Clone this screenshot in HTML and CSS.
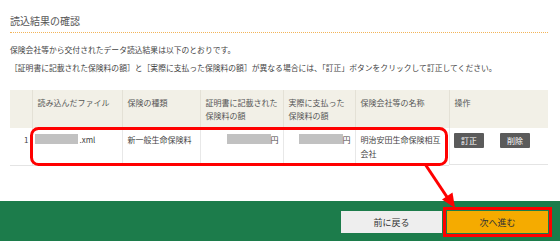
FILE: index.html
```html
<!DOCTYPE html>
<html lang="ja">
<head>
<meta charset="utf-8">
<link rel="stylesheet" href="styles.css">
</head>
<body>
<div class="page">
  <main class="main">
    <h1 class="title">読込結果の確認</h1>
    <p class="lead">保険会社等から交付されたデータ読込結果は以下のとおりです。<br>［証明書に記載された保険料の額］と［実際に支払った保険料の額］が異なる場合には、「訂正」ボタンをクリックして訂正してください。</p>
    <table class="result">
      <colgroup>
        <col class="c-no"><col class="c-file"><col class="c-kind"><col class="c-amt1"><col class="c-amt2"><col class="c-name"><col class="c-op">
      </colgroup>
      <thead>
        <tr>
          <th></th>
          <th>読み込んだファイル</th>
          <th>保険の種類</th>
          <th>証明書に記載された<br>保険料の額</th>
          <th>実際に支払った<br>保険料の額</th>
          <th>保険会社等の名称</th>
          <th>操作</th>
        </tr>
      </thead>
      <tbody>
        <tr>
          <td class="num">1</td>
          <td><span class="mask mask-file"></span>.xml</td>
          <td>新一般生命保険料</td>
          <td class="amt"><span class="mask mask-amt"></span>円</td>
          <td class="amt"><span class="mask mask-amt"></span>円</td>
          <td>明治安田生命保険相互<br>会社</td>
          <td class="ops"><button class="op">訂正</button><button class="op">削除</button></td>
        </tr>
      </tbody>
    </table>
  </main>
  <footer class="footer">
    <button class="btn btn-back">前に戻る</button>
    <button class="btn btn-next">次へ進む</button>
  </footer>
  <svg class="annot" width="560" height="241" viewBox="0 0 560 241">
    <rect x="31.5" y="128.5" width="415" height="36" rx="7" ry="7" fill="none" stroke="#f00" stroke-width="3"/>
    <line x1="425" y1="164" x2="449" y2="200" stroke="#f00" stroke-width="3"/>
    <polygon points="455,208 452.5,192.5 442,199.5" fill="#f00"/>
    <rect x="444.5" y="208.5" width="106" height="27" fill="none" stroke="#f00" stroke-width="3"/>
  </svg>
</div>
</body>
</html>
```
FILE: styles.css
```css
* { box-sizing: border-box; }
html, body { margin: 0; padding: 0; background: #fff; }
body {
  font-family: "Noto Sans CJK JP", "Noto Sans", sans-serif;
  color: #444;
  width: 560px;
  height: 241px;
  overflow: hidden;
}
.page { position: relative; width: 560px; height: 241px; display: flex; flex-direction: column; }
.main { padding: 14px 12px 0 10px; height: 201px; }
.title {
  margin: 0;
  font-size: 10px;
  line-height: 14px;
  font-weight: normal;
  color: #555;
  padding-bottom: 4px;
  border-bottom: 1px dotted #f3b458;
}
.lead {
  margin: 8px 0 0;
  font-size: 7.8px;
  line-height: 18px;
  color: #444;
  white-space: nowrap;
}
.result {
  margin-top: 13px;
  width: 538px;
  border-collapse: collapse;
  table-layout: fixed;
  font-size: 8px;
}
.c-no { width: 22px; }
.c-file { width: 90px; }
.c-kind { width: 78px; }
.c-amt1 { width: 83px; }
.c-amt2 { width: 72px; }
.c-name { width: 94px; }
.c-op { width: 99px; }
.result th {
  background: #f2f0e7;
  font-weight: normal;
  text-align: left;
  vertical-align: top;
  color: #555;
  line-height: 13px;
  padding: 6px 4px 6px 5px;
  height: 38px;
  border-left: 1px solid #e4e1d6;
}
.result th:first-child { border-left: none; }
.result td {
  vertical-align: top;
  line-height: 14px;
  padding: 5px 4px 4px 5px;
  height: 37px;
  border-left: 1px solid #e8e8e8;
  border-bottom: 1px solid #e4e4e4;
  white-space: nowrap;
}
.result td:first-child { border-left: none; }
.result td.num { text-align: right; padding-right: 3px; }
.result td.amt { text-align: right; padding-right: 4px; }
.mask {
  display: inline-block;
  background: #c1c1c1;
  height: 10px;
  vertical-align: -1px;
}
.mask-file { width: 43px; margin-right: 2px; margin-left: -3px; }
.mask-amt { width: 44px; }
.ops { display: flex; gap: 16px; padding-left: 4px !important; }
.op {
  margin: 0;
  width: 30px;
  height: 15px;
  border: none;
  border-radius: 1px;
  background: #5b5b5b;
  color: #fff;
  font-family: inherit;
  font-size: 8px;
  line-height: 15px;
  padding: 0;
}
.footer {
  height: 40px;
  background: #1c7c4b;
  display: flex;
  justify-content: flex-end;
  align-items: flex-start;
  gap: 5px;
  padding: 10px 12px 0 0;
}
.btn {
  margin: 0;
  width: 101px;
  height: 22px;
  border: none;
  border-radius: 0;
  font-family: inherit;
  font-size: 9px;
  color: #333;
  padding: 0;
}
.btn-back { background: #eeeeee; }
.btn-next { background: #f5ab00; }
.annot { position: absolute; left: 0; top: 0; pointer-events: none; }
```
